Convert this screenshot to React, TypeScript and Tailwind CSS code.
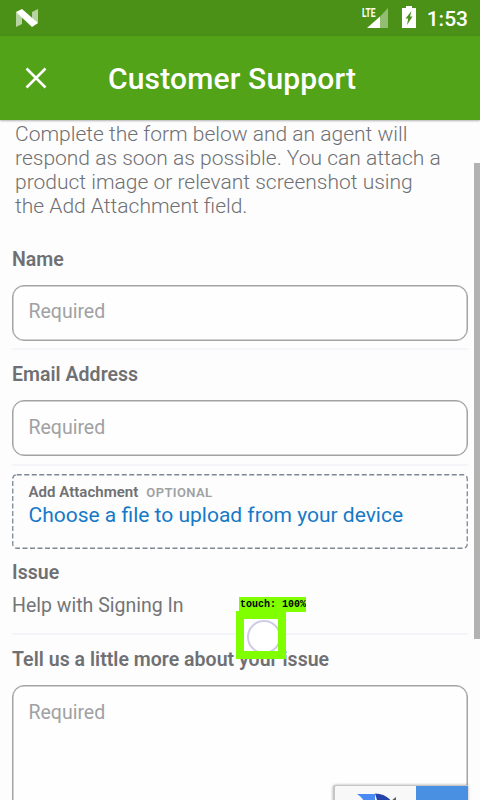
import React from "react";

function StatusBar() {
  return (
    <div className="flex h-9 shrink-0 items-center bg-[#4b9117] pl-4 pr-3">
      <svg width="22" height="18" viewBox="0 0 22 18">
        <path d="M0 3v15l6-3V7zM22 0v14l-6 2V3z" fill="#fff" opacity=".6" />
        <path d="M0 3L6 0l16 14-6 4z" fill="#fff" />
      </svg>
      <div className="ml-auto flex items-center">
        <svg width="28" height="24" viewBox="0 0 28 24" className="mr-3">
          <path d="M26 2v20h-8V10.500z" fill="#fff" opacity=".4" />
          <path d="M18 10.500V22H5z" fill="#fff" />
          <text x="0" y="10.500" fontSize="13" fontWeight="700" textLength="13.500" lengthAdjust="spacingAndGlyphs" fill="#fff">LTE</text>
        </svg>
        <svg width="14" height="22" viewBox="0 0 14 22" className="mb-[2px] mr-[11px]">
          <path d="M4 0h6v2h4v20H0V2h4z" fill="#fff" />
          <path d="M9.500 5L3.500 12.500H6.200L5 19L10.500 10.500H8z" fill="#4b9117" />
        </svg>
        <span className="mt-[2px] text-[21px] font-medium leading-6 text-white">1:53</span>
      </div>
    </div>
  );
}

function AppBar() {
  return (
    <header className="z-10 flex h-[84px] shrink-0 items-center bg-[#53a318] pl-[25px] shadow-[0_1px_2px_rgba(0,0,0,0.3)]">
      <svg width="22" height="22" viewBox="0 0 22 22" fill="none" stroke="#fff" strokeWidth="2.500">
        <path d="M1.500 1.500l19 19M20.500 1.500l-19 19" />
      </svg>
      <h1 className="ml-[61px] mt-[2px] text-[30px] font-medium leading-9 tracking-[0.16px] text-white">Customer Support</h1>
    </header>
  );
}

function Label({ children }: { children: React.ReactNode }) {
  return <div className="h-6 shrink-0 whitespace-nowrap pt-px text-[19.5px] font-semibold leading-6 tracking-[0.03px] text-[#6f7073]">{children}</div>;
}

function Field({ size = "h-14 pt-[14px]" }: { size?: string }) {
  return (
    <div className={`shrink-0 rounded-xl border border-[#a2a3a5] bg-[#fefefe] px-[15.5px] text-[19.5px] leading-6 text-[#a0a1a3] shadow-[inset_0_0_0_0.5px_#a2a3a5] ${size}`}>
      Required
    </div>
  );
}

function Divider() {
  return <div className="h-[2px] shrink-0 bg-[#f4f5f8]" />;
}

function TouchMarker() {
  return (
    <div className="absolute left-[236px] top-[597px] z-20">
      <div className="ml-[3px] h-[15px] w-[67px] overflow-hidden bg-[#80ff00] pl-px font-['Liberation_Mono',monospace] text-[10px] font-bold leading-[16px] text-black">
        <span className="whitespace-pre">touch: 100%</span>
      </div>
      <div className="relative -mt-px h-12 w-[50px] overflow-hidden border-8 border-[#80ff00] bg-white">
        <div className="absolute left-[3px] top-[1px] h-[34px] w-[34px] rounded-full border-2 border-[#cfcce6]" />
      </div>
    </div>
  );
}

function CaptchaBadge() {
  return (
    <div className="absolute left-[333px] top-[785px] z-10 flex h-20 w-[135px] overflow-hidden rounded-tl-[3px] border-l-2 border-t border-[#c6c6c6] bg-[#f8f8f8] shadow-[0_0_3px_rgba(0,0,0,0.35)]">
      <svg width="81" height="60" viewBox="0 0 81 60">
        <path d="M22 8h18v20H28l1-13a22 22 0 0 0-7-7z" fill="#4a8af4" />
        <path d="M40 7.500c6 0 11 2 15 6v14H42V14z" fill="#2443ad" />
        <path d="M56 15l5-4v6z" fill="#555a66" />
      </svg>
      <div className="flex-1 bg-[#4a90e2]" />
    </div>
  );
}

export default function App() {
  return (
    <div className="relative flex h-[800px] w-[480px] flex-col overflow-hidden bg-[#fdfdfd] font-[Roboto,sans-serif]">
      <StatusBar />
      <AppBar />
      <div className="flex min-h-0 flex-1">
        <main className="flex w-[468px] shrink-0 flex-col overflow-hidden pl-3 pt-[2px]">
          <p className="ml-[3px] h-24 shrink-0 whitespace-nowrap text-[21px] font-light leading-6 text-[#6f7073]">
            Complete the form below and an agent will<br />
            respond as soon as possible. You can attach a<br />
            product image or relevant screenshot using<br />
            the Add Attachment field.
          </p>
          <div className="h-[29px] shrink-0" />
          <Label>Name</Label>
          <div className="h-[14px] shrink-0" />
          <Field />
          <div className="h-[7px] shrink-0" />
          <Divider />
          <div className="h-3 shrink-0" />
          <Label>Email Address</Label>
          <div className="h-[14px] shrink-0" />
          <Field size="h-14 pt-[15px]" />
          <div className="h-2 shrink-0" />
          <Divider />
          <div className="relative mt-2 h-[75px] shrink-0 pl-[16.5px] pt-[8px]">
            <svg className="absolute inset-0" width="456" height="75" fill="none">
              <rect x="0.750" y="0.750" width="454.500" height="73.500" rx="4" stroke="#7d8794" strokeWidth="1.300" strokeDasharray="5 2.500" />
            </svg>
            <div className="flex h-5 items-baseline whitespace-nowrap leading-5">
              <span className="text-[15px] font-semibold tracking-[0.03px] text-[#6f7073]">Add Attachment</span>
              <span className="ml-2 text-[13px] font-semibold tracking-[0.4px] text-[#a0a1a3]">OPTIONAL</span>
            </div>
            <div className="mt-px whitespace-nowrap text-[21px] leading-6 text-[#1679c8]">Choose a file to upload from your device</div>
          </div>
          <div className="mt-[11px] shrink-0"><Label>Issue</Label></div>
          <div className="mt-[10px] h-6 shrink-0 text-[19.5px] leading-6 text-[#747577]">Help with Signing In</div>
          <div className="h-[15px] shrink-0" />
          <Divider />
          <div className="h-3 shrink-0" />
          <Label>Tell us a little more about your issue</Label>
          <div className="h-[14px] shrink-0" />
          <Field size="h-[150px] pt-[15px]" />
        </main>
        <div className="ml-[6px] mt-[43px] h-[476px] w-[6px] bg-[#b2b2b2]" />
      </div>
      <CaptchaBadge />
      <TouchMarker />
    </div>
  );
}
